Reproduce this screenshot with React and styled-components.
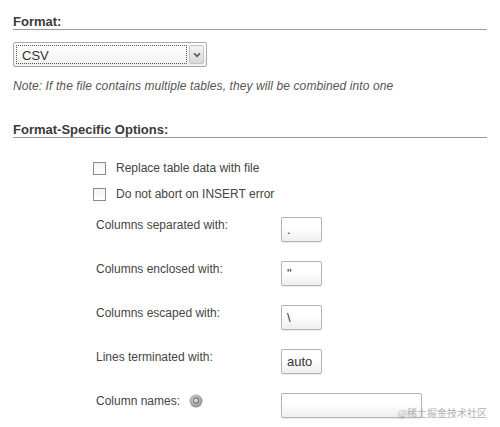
import styled, { createGlobalStyle } from 'styled-components'

const GlobalStyle = createGlobalStyle`
  html, body {
    margin: 0;
    padding: 0;
    background: #fff;
  }
  body {
    font-family: "Liberation Sans", Arial, sans-serif;
    color: #444;
  }
`

const Page = styled.div`
  position: relative;
  width: 500px;
  height: 427px;
  box-sizing: border-box;
  padding: 14px 13px 0 13px;
  overflow: hidden;
`

const Heading = styled.h2`
  margin: ${p => p.$top || 0}px 0 0 0;
  font-size: 13px;
  line-height: 15px;
  font-weight: bold;
  color: #3a3a3a;
  border-bottom: 1px solid #9a9a9a;
`

const Select = styled.div`
  margin-top: 12px;
  width: 194px;
  height: 25px;
  box-sizing: border-box;
  border: 1px solid #a8a8a8;
  border-radius: 2px;
  background: linear-gradient(#ffffff, #f1f1f1);
  display: flex;
  align-items: center;
  padding: 2px;
  gap: 2px;
`

const SelectValue = styled.div`
  flex: 1;
  height: 100%;
  box-sizing: border-box;
  border: 1px dotted #555;
  font-size: 13px;
  line-height: 19px;
  padding-left: 5px;
  color: #333;
`

const SelectArrow = styled.div`
  width: 13px;
  height: 17px;
  border: 1px solid #c4c4c4;
  border-radius: 2px;
  background: linear-gradient(#f4f4f4, #d8d8d8);
  display: flex;
  align-items: center;
  justify-content: center;
`

const Note = styled.p`
  margin: 12px 0 0 0;
  font-size: 12px;
  line-height: 14px;
  letter-spacing: 0.1px;
  font-style: italic;
  color: #555;
`

const Options = styled.div`
  margin-top: 23px;
  padding-left: 80px;
`

const CheckRow = styled.label`
  display: flex;
  align-items: flex-start;
  gap: 10px;
  height: 26px;
  font-size: 12px;
  line-height: 14px;
  color: #444;
`

const Box = styled.span`
  width: 11px;
  height: 11px;
  margin-top: 1px;
  border: 1px solid #8c8c8c;
  background: linear-gradient(#f2f2f2, #ffffff);
  flex: none;
`

const Fields = styled.div`
  margin-top: 4px;
  padding-left: 3px;
  display: grid;
  grid-template-columns: 185px auto;
  grid-auto-rows: 44px;
  align-items: start;
`

const Label = styled.div`
  display: flex;
  align-items: center;
  gap: 9px;
  font-size: 12px;
  line-height: 14px;
  padding-top: 1px;
  color: #444;
`

const Input = styled.div`
  width: ${p => p.$w}px;
  height: 25px;
  box-sizing: border-box;
  border: 1px solid #b4b4b4;
  border-radius: 2px;
  background: linear-gradient(#ffffff 40%, #eeeeee);
  box-shadow: 0 1px 1px rgba(0, 0, 0, 0.08);
  font-size: 13px;
  line-height: 23px;
  padding-left: 5px;
  color: #333;
`

const Watermark = styled.div`
  position: absolute;
  right: 13px;
  bottom: 7px;
  font-family: "Liberation Serif", "Noto Sans CJK SC", serif;
  font-size: 10px;
  color: #b0b0b0;
`

const HelpIcon = () => (
  <svg width="14" height="14" viewBox="0 0 14 14">
    <defs>
      <radialGradient id="hg" cx="0.45" cy="0.4" r="0.6">
        <stop offset="0" stopColor="#e8e8e8" />
        <stop offset="0.6" stopColor="#b0b0b0" />
        <stop offset="1" stopColor="#888" />
      </radialGradient>
    </defs>
    <circle cx="7" cy="7" r="6.5" fill="url(#hg)" />
    <circle cx="7" cy="6.5" r="2.6" fill="none" stroke="#7a7a7a" strokeWidth="1.1" />
  </svg>
)

const fields = [
  { label: 'Columns separated with:', value: '.', w: 41 },
  { label: 'Columns enclosed with:', value: '"', w: 41 },
  { label: 'Columns escaped with:', value: '\\', w: 41 },
  { label: 'Lines terminated with:', value: 'auto', w: 41 },
  { label: 'Column names:', value: '', w: 141, help: true },
]

export default function App() {
  return (
    <Page>
      <GlobalStyle />
      <Heading>Format:</Heading>
      <Select>
        <SelectValue>CSV</SelectValue>
        <SelectArrow>
          <svg width="8" height="6" viewBox="0 0 8 6">
            <path d="M1 1.2 L4 4.4 L7 1.2" fill="none" stroke="#555" strokeWidth="1.6" />
          </svg>
        </SelectArrow>
      </Select>
      <Note>Note: If the file contains multiple tables, they will be combined into one</Note>

      <Heading $top={29}>Format-Specific Options:</Heading>
      <Options>
        <CheckRow><Box />Replace table data with file</CheckRow>
        <CheckRow><Box />Do not abort on INSERT error</CheckRow>
        <Fields>
          {fields.map(f => [
            <Label key={f.label + 'l'}>
              {f.label}
              {f.help && <HelpIcon />}
            </Label>,
            <Input key={f.label + 'i'} $w={f.w}>{f.value}</Input>,
          ])}
        </Fields>
      </Options>
      <Watermark>@稀土掘金技术社区</Watermark>
    </Page>
  )
}
